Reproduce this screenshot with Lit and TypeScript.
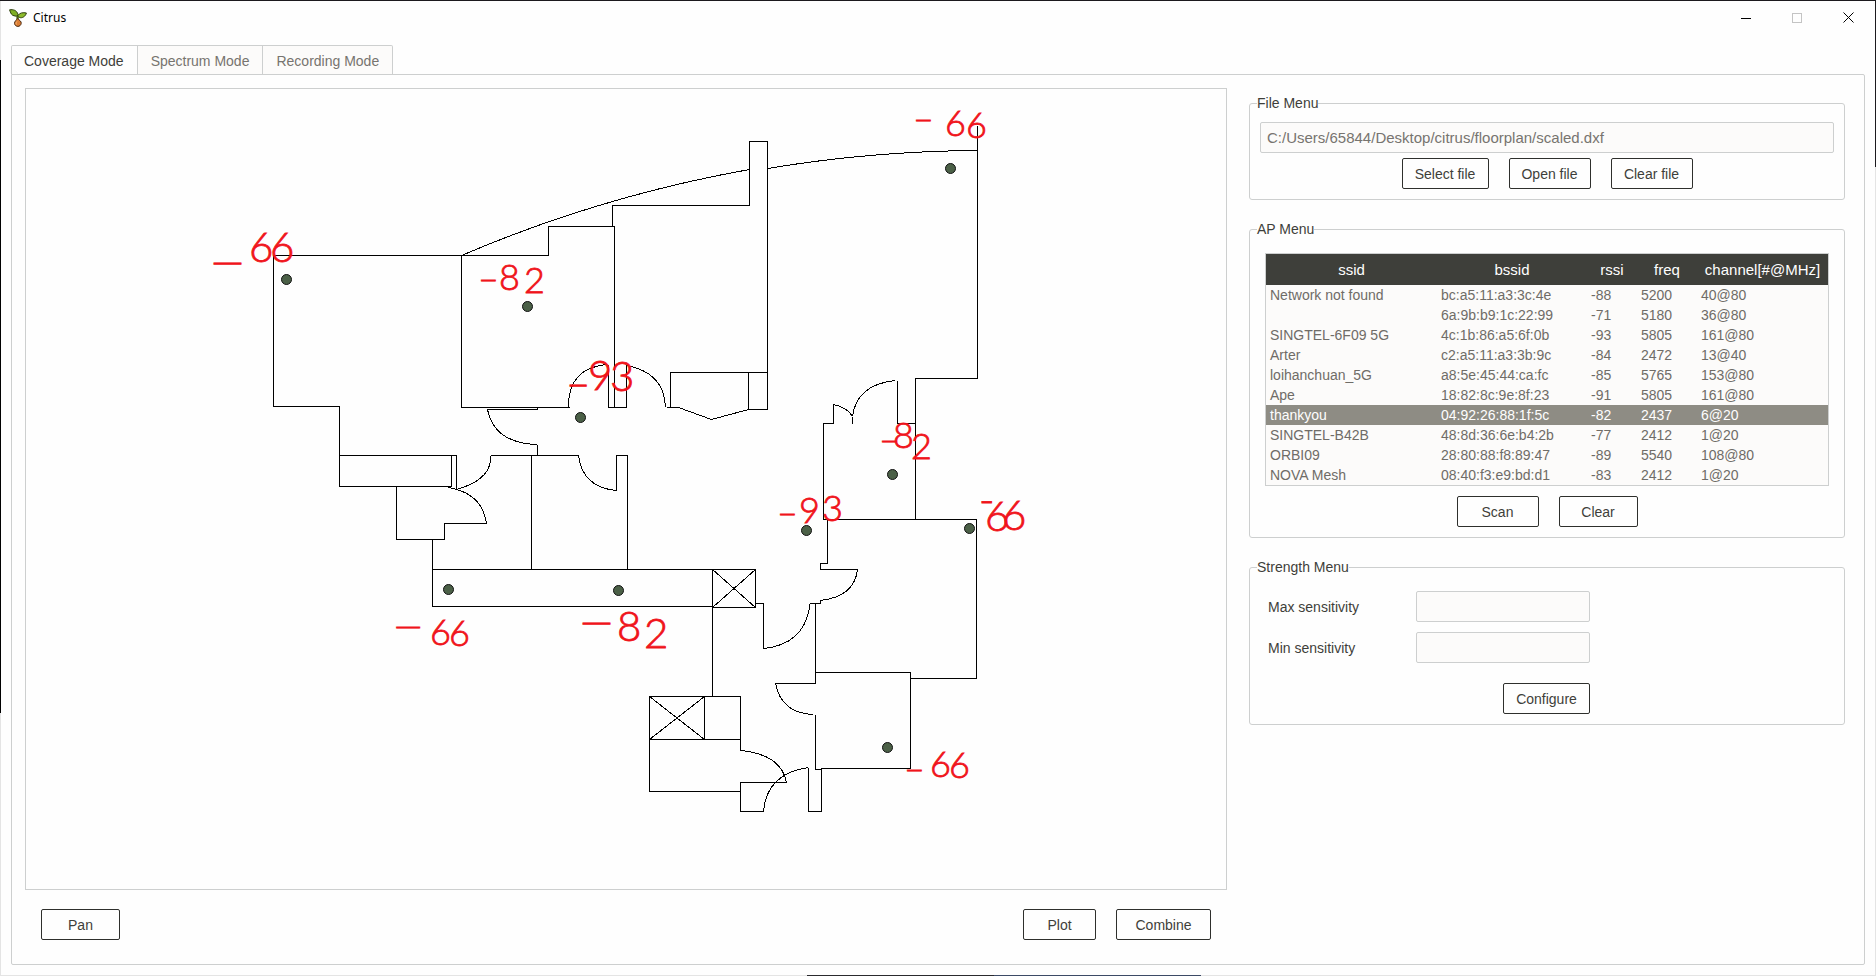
import { LitElement, html, svg, css } from "lit";
import { customElement, state } from "lit/decorators.js";

interface AccessPoint {
  ssid: string;
  bssid: string;
  rssi: number;
  freq: number;
  channel: string;
}

interface Note {
  chars: string;
  x: string;
  y: string;
  tall?: boolean;
}

const ACCESS_POINTS: AccessPoint[] = [
  { ssid: "Network not found", bssid: "bc:a5:11:a3:3c:4e", rssi: -88, freq: 5200, channel: "40@80" },
  { ssid: "", bssid: "6a:9b:b9:1c:22:99", rssi: -71, freq: 5180, channel: "36@80" },
  { ssid: "SINGTEL-6F09 5G", bssid: "4c:1b:86:a5:6f:0b", rssi: -93, freq: 5805, channel: "161@80" },
  { ssid: "Arter", bssid: "c2:a5:11:a3:3b:9c", rssi: -84, freq: 2472, channel: "13@40" },
  { ssid: "loihanchuan_5G", bssid: "a8:5e:45:44:ca:fc", rssi: -85, freq: 5765, channel: "153@80" },
  { ssid: "Ape", bssid: "18:82:8c:9e:8f:23", rssi: -91, freq: 5805, channel: "161@80" },
  { ssid: "thankyou", bssid: "04:92:26:88:1f:5c", rssi: -82, freq: 2437, channel: "6@20" },
  { ssid: "SINGTEL-B42B", bssid: "48:8d:36:6e:b4:2b", rssi: -77, freq: 2412, channel: "1@20" },
  { ssid: "ORBI09", bssid: "28:80:88:f8:89:47", rssi: -89, freq: 5540, channel: "108@80" },
  { ssid: "NOVA Mesh", bssid: "08:40:f3:e9:bd:d1", rssi: -83, freq: 2412, channel: "1@20" },
];

const WALLS = [
  // west rooms
  "M273 406V255H548V226H614V407",
  "M612 226V205H749V141H767V409H748V372",
  "M461 255V407H569",
  "M273 406H339V486H451V455",
  "M339 455H456V489",
  "M396 486V539H444V523H486",
  "M432 539V606H712",
  "M432 569H755V607H712V569",
  "M531 455V569",
  "M490 455H578",
  "M537 444V455",
  "M487 409H537V407",
  "M616 490V455H627V569",
  "M608 364V407H626V365",
  "M666 407H678L711 419L748 409",
  "M670 407V372H767",
  // east rooms
  "M977 125V378H915V519",
  "M897 380V423H915",
  "M852 416V423",
  "M833 404V423H823V519H976V678H910",
  "M827 519V563H820V569H857",
  "M820 600V603H809",
  "M815 603V683H775",
  "M755 603H763V648",
  "M815 672H910V768H821V811H808V767",
  "M815 714V769H821",
  // south block
  "M712 607V696",
  "M740 750V696H649V791H740",
  "M649 739H740",
  "M704 696V739",
  "M786 782H740V811H763",
];

const ARCS = [
  "M461 255A1320 1320 0 0 1 749 169",
  "M767 168A1320 1320 0 0 1 977 150",
  "M490 455V460Q488 480 456 489",
  "M448 487Q482 493 486 523",
  "M487 409Q494 443 537 444",
  "M578 455Q582 487 616 490",
  "M568 407Q567 368 606 364",
  "M626 365Q664 372 665 407",
  "M895 380Q856 384 852 416",
  "M833 404Q847 407 852 416",
  "M857 569Q854 596 820 600",
  "M809 603V607Q803 644 763 648",
  "M775 683Q781 713 813 714",
  "M740 750Q781 754 786 782",
  "M763 811Q766 773 808 767",
  // shafts
  "M712 569L755 607M755 569L712 607",
  "M649 696L704 739M704 696L649 739",
];

const POINTS: [number, number][] = [
  [286, 279], [527, 306], [580, 417], [950, 168], [448, 589],
  [618, 590], [892, 474], [806, 530], [969, 528], [887, 747],
];

const NOTES: Note[] = [
  { chars: "—66", x: "211 249 270", y: "276 262 262", tall: true },
  { chars: "–82", x: "478 499 524", y: "291 290 293" },
  { chars: "–93", x: "566 588 610", y: "398 390 391", tall: true },
  { chars: "–66", x: "913 945 966", y: "131 136 138" },
  { chars: "–82", x: "879 893 911", y: "452 448 459" },
  { chars: "–93", x: "777 799 822", y: "525 523 521" },
  { chars: "-66", x: "979 985 1002", y: "514 531 530", tall: true },
  { chars: "—66", x: "394 430 449", y: "638 645 646" },
  { chars: "—82", x: "580 617 644", y: "636 641 648", tall: true },
  { chars: "–66", x: "904 930 949", y: "781 777 778" },
];

const TABS = ["Coverage Mode", "Spectrum Mode", "Recording Mode"];

@customElement("floor-plan")
export class FloorPlan extends LitElement {
  static styles = css`
    :host {
      display: block;
      min-height: 0;
      border: 1px solid #cdcfcf;
      background: #fefefe;
      overflow: hidden;
    }
    .plan {
      display: block;
      width: 100%;
      height: 100%;
    }
    .line {
      fill: none;
      stroke: #000;
      stroke-width: 1;
      shape-rendering: crispEdges;
    }
    .point {
      fill: #4b6047;
      stroke: #111;
      stroke-width: 1;
    }
    .note {
      fill: #f0141b;
      stroke: #f0141b;
      stroke-width: 0.8;
      font-family: Lato, "Open Sans", sans-serif;
      font-size: 36px;
      font-weight: 300;
    }
    .note.tall {
      font-size: 42px;
    }
  `;

  render() {
    return html`
      <svg class="plan" viewBox="26 89 1200 800" preserveAspectRatio="xMinYMin meet" role="img" aria-label="Floor plan">
        <g transform="translate(0.5 0.5)">
          ${WALLS.map((d) => svg`<path class="line" d=${d} />`)}
          ${ARCS.map((d) => svg`<path class="line" d=${d} />`)}
          ${POINTS.map(([x, y]) => svg`<circle class="point" cx=${x} cy=${y} r="5" />`)}
        </g>
        ${NOTES.map((n) => svg`<text class=${n.tall ? "note tall" : "note"} x=${n.x} y=${n.y}>${n.chars}</text>`)}
      </svg>
    `;
  }
}

@customElement("app-root")
export class AppRoot extends LitElement {
  @state() private tab = 0;
  @state() private selected = 6;

  static styles = css`
    * {
      box-sizing: border-box;
    }
    :host {
      display: flex;
      flex-direction: column;
      box-sizing: border-box;
      height: 100vh;
      min-height: 800px;
      padding: 0 1px 11px;
      border-top: 1px solid #1c1a1e;
      background:
        linear-gradient(#e4e4e4 6%, #000 6% 73%, #e4e4e4 73%) left / 1px 100% no-repeat,
        linear-gradient(#1c1a1e 17%, #e4e4e4 17%) right / 1px 100% no-repeat,
        linear-gradient(90deg, #e4e4e4 43%, #2a2a2e 43% 53%, #3c4a66 53% 64%, #e4e4e4 64%) bottom / 100% 1px no-repeat,
        #fefefe;
      color: #3e3f3a;
      font: 14px/18px "Liberation Sans", Arial, sans-serif;
    }
    .titlebar {
      display: flex;
      align-items: flex-start;
      justify-content: space-between;
      height: 44px;
      padding: 0 1px 0 8px;
      flex: none;
    }
    .brand {
      display: flex;
      align-items: center;
      gap: 6px;
      padding-top: 8px;
      color: #000;
      font: 12px/18px "Noto Sans", "Open Sans", sans-serif;
    }
    .logo {
      width: 18px;
      height: 18px;
    }
    .controls {
      display: flex;
    }
    .control {
      display: grid;
      place-items: center;
      width: 51px;
      height: 32px;
      padding: 0;
      border: 0;
      background: none;
    }
    .glyph {
      width: 11px;
      height: 11px;
      fill: none;
      stroke: #000;
    }
    .control:disabled .glyph {
      stroke: #c4c4c4;
    }
    .tabs {
      display: flex;
      flex: none;
      margin: 0 10px -1px;
      height: 30px;
    }
    .tab {
      font: inherit;
      padding: 2px 13px 0;
      border: 1px solid #cdcfcf;
      border-left-width: 0;
      background: #fcfbfa;
      color: #77746f;
    }
    .tab:first-child {
      padding-left: 12px;
      border-left-width: 1px;
      border-top-left-radius: 2px;
    }
    .tab:last-child {
      border-top-right-radius: 2px;
    }
    .tab.current {
      background: #fefefe;
      border-bottom-color: #fefefe;
      color: #3e3f3a;
    }
    .pane {
      flex: 1;
      min-height: 0;
      display: grid;
      grid-template-columns: minmax(0, 1fr) 596px;
      gap: 22px;
      margin: 0 10px;
      padding: 13px 19px 24px 13px;
      border: 1px solid #cdcfcf;
      border-radius: 0 2px 2px 2px;
    }
    .work {
      display: flex;
      flex-direction: column;
      gap: 19px;
      min-height: 0;
    }
    .canvas {
      flex: 1;
    }
    .toolbar {
      display: flex;
      justify-content: space-between;
      padding: 0 16px;
    }
    .menus {
      display: flex;
      flex-direction: column;
      gap: 20px;
      padding-top: 6px;
    }
    .group {
      margin: 0;
      min-width: 0;
      border: 1px solid #cdcfcf;
      border-radius: 3px;
      padding: 10px;
    }
    .group.inset {
      padding: 15px 15px 10px;
    }
    .title {
      margin-left: -3px;
      padding: 0;
    }
    .inset .title {
      margin-left: -8px;
    }
    .row {
      display: flex;
      justify-content: center;
      gap: 20px;
    }
    .box {
      display: block;
      width: 100%;
      height: 31px;
      padding: 0 6px;
      border: 1px solid #cdcfcf;
      border-radius: 2px;
      background: #fcfbfa;
      color: #77746f;
      font: inherit;
      font-size: 15px;
    }
    .button {
      height: 31px;
      padding: 0;
      border: 1px solid #2e2f2c;
      border-radius: 2px;
      background: #fefefe;
      color: #3e3f3a;
      font: inherit;
    }
    .w73 { width: 73px; }
    .w79 { width: 79px; }
    .w82 { width: 82px; }
    .w87 { width: 87px; }
    .w95 { width: 95px; }
    .file {
      display: grid;
      gap: 5px;
    }
    .ap {
      display: grid;
      gap: 10px;
    }
    .list {
      border: 1px solid #cdcfcf;
      background: #fcfbfa;
    }
    .table {
      width: 100%;
      table-layout: fixed;
      border-collapse: collapse;
      color: #6f6c67;
    }
    .c-ssid { width: 171px; }
    .c-bssid { width: 150px; }
    .c-rssi { width: 50px; }
    .c-freq { width: 60px; }
    .table th {
      height: 31px;
      padding: 0;
      background: #3e3f3a;
      color: #fefefe;
      font-size: 15px;
      font-weight: normal;
      text-align: center;
    }
    .table td {
      height: 20px;
      padding: 0 4px;
      white-space: nowrap;
    }
    .table .selected td {
      background: #8e8c84;
      color: #fefefe;
    }
    .strength {
      display: grid;
      grid-template-columns: 148px 174px;
      align-items: center;
      gap: 10px 0;
      padding-left: 3px;
    }
    .configure {
      grid-column: 2;
      justify-self: end;
      margin-top: 10px;
    }
  `;

  render() {
    return html`
      <header class="titlebar">
        <div class="brand">
          <svg class="logo" viewBox="0 0 18 18" aria-hidden="true">
            <path d="M8.5 11C8.6 9 8.4 7.5 9 6" fill="none" stroke="#4d6b14" stroke-width="2.4" />
            <path d="M.6.8C4 .2 8 1.200 9 5.600 8.800 7 7.500 7.400 6 7 2.500 6.800 1.600 4 .6.800Z" fill="#7fae22" stroke="#2c3d0c" />
            <path d="M9 6.500C10.500 3.800 14 3.200 17.400 4 16.600 7.400 13 9.600 10.400 8.400 9.300 8 8.800 7.400 9 6.500Z" fill="#8dbb2b" stroke="#2c3d0c" />
            <path d="M8.700 9.400C10.500 11.400 12.600 12.400 12.200 14.400 11.900 16.400 10.400 17.400 8.900 17.400S5.700 16.400 5.500 14.400C5.300 12.400 7.500 11.200 8.700 9.400Z" fill="#dc7d33" stroke="#4a2a12" />
            <path d="M8 12.500C7 13.300 6.900 14.500 7.500 15.500" fill="none" stroke="#f3b273" />
          </svg>
          <span>Citrus</span>
        </div>
        <div class="controls">
          <button class="control" aria-label="Minimize">
            <svg class="glyph" viewBox="0 0 11 11"><path d="M0 6.500H10" /></svg>
          </button>
          <button class="control" aria-label="Maximize" disabled>
            <svg class="glyph" viewBox="0 0 11 11"><rect x="0.500" y="1.500" width="9" height="9" /></svg>
          </button>
          <button class="control" aria-label="Close">
            <svg class="glyph" viewBox="0 0 11 11"><path d="M.5.5L10.500 10.500M10.500.5L.5 10.500" /></svg>
          </button>
        </div>
      </header>

      <nav class="tabs" role="tablist">
        ${TABS.map(
          (name, i) => html`<button
            class="tab ${i === this.tab ? "current" : ""}"
            role="tab"
            aria-selected=${i === this.tab}
            @click=${() => (this.tab = i)}
          >${name}</button>`
        )}
      </nav>

      <main class="pane">
        <section class="work">
          <floor-plan class="canvas"></floor-plan>
          <div class="toolbar">
            <button class="button w79">Pan</button>
            <div class="row">
              <button class="button w73">Plot</button>
              <button class="button w95">Combine</button>
            </div>
          </div>
        </section>

        <aside class="menus">
          <fieldset class="group">
            <legend class="title">File Menu</legend>
            <div class="file">
              <input class="box" aria-label="File path" readonly value="C:/Users/65844/Desktop/citrus/floorplan/scaled.dxf" />
              <div class="row">
                <button class="button w87">Select file</button>
                <button class="button w82">Open file</button>
                <button class="button w82">Clear file</button>
              </div>
            </div>
          </fieldset>

          <fieldset class="group inset">
            <legend class="title">AP Menu</legend>
            <div class="ap">
              <div class="list">
                <table class="table">
                  <colgroup>
                    <col class="c-ssid" /><col class="c-bssid" /><col class="c-rssi" /><col class="c-freq" /><col />
                  </colgroup>
                  <thead>
                    <tr><th>ssid</th><th>bssid</th><th>rssi</th><th>freq</th><th>channel[#@MHz]</th></tr>
                  </thead>
                  <tbody>
                    ${ACCESS_POINTS.map(
                      (ap, i) => html`<tr
                        class=${i === this.selected ? "selected" : ""}
                        @click=${() => (this.selected = i)}
                      >
                        <td>${ap.ssid}</td>
                        <td>${ap.bssid}</td>
                        <td>${ap.rssi}</td>
                        <td>${ap.freq}</td>
                        <td>${ap.channel}</td>
                      </tr>`
                    )}
                  </tbody>
                </table>
              </div>
              <div class="row">
                <button class="button w82">Scan</button>
                <button class="button w79">Clear</button>
              </div>
            </div>
          </fieldset>

          <fieldset class="group inset">
            <legend class="title">Strength Menu</legend>
            <div class="strength">
              <label for="max">Max sensitivity</label>
              <input class="box" id="max" />
              <label for="min">Min sensitivity</label>
              <input class="box" id="min" />
              <button class="button w87 configure">Configure</button>
            </div>
          </fieldset>
        </aside>
      </main>
    `;
  }
}
